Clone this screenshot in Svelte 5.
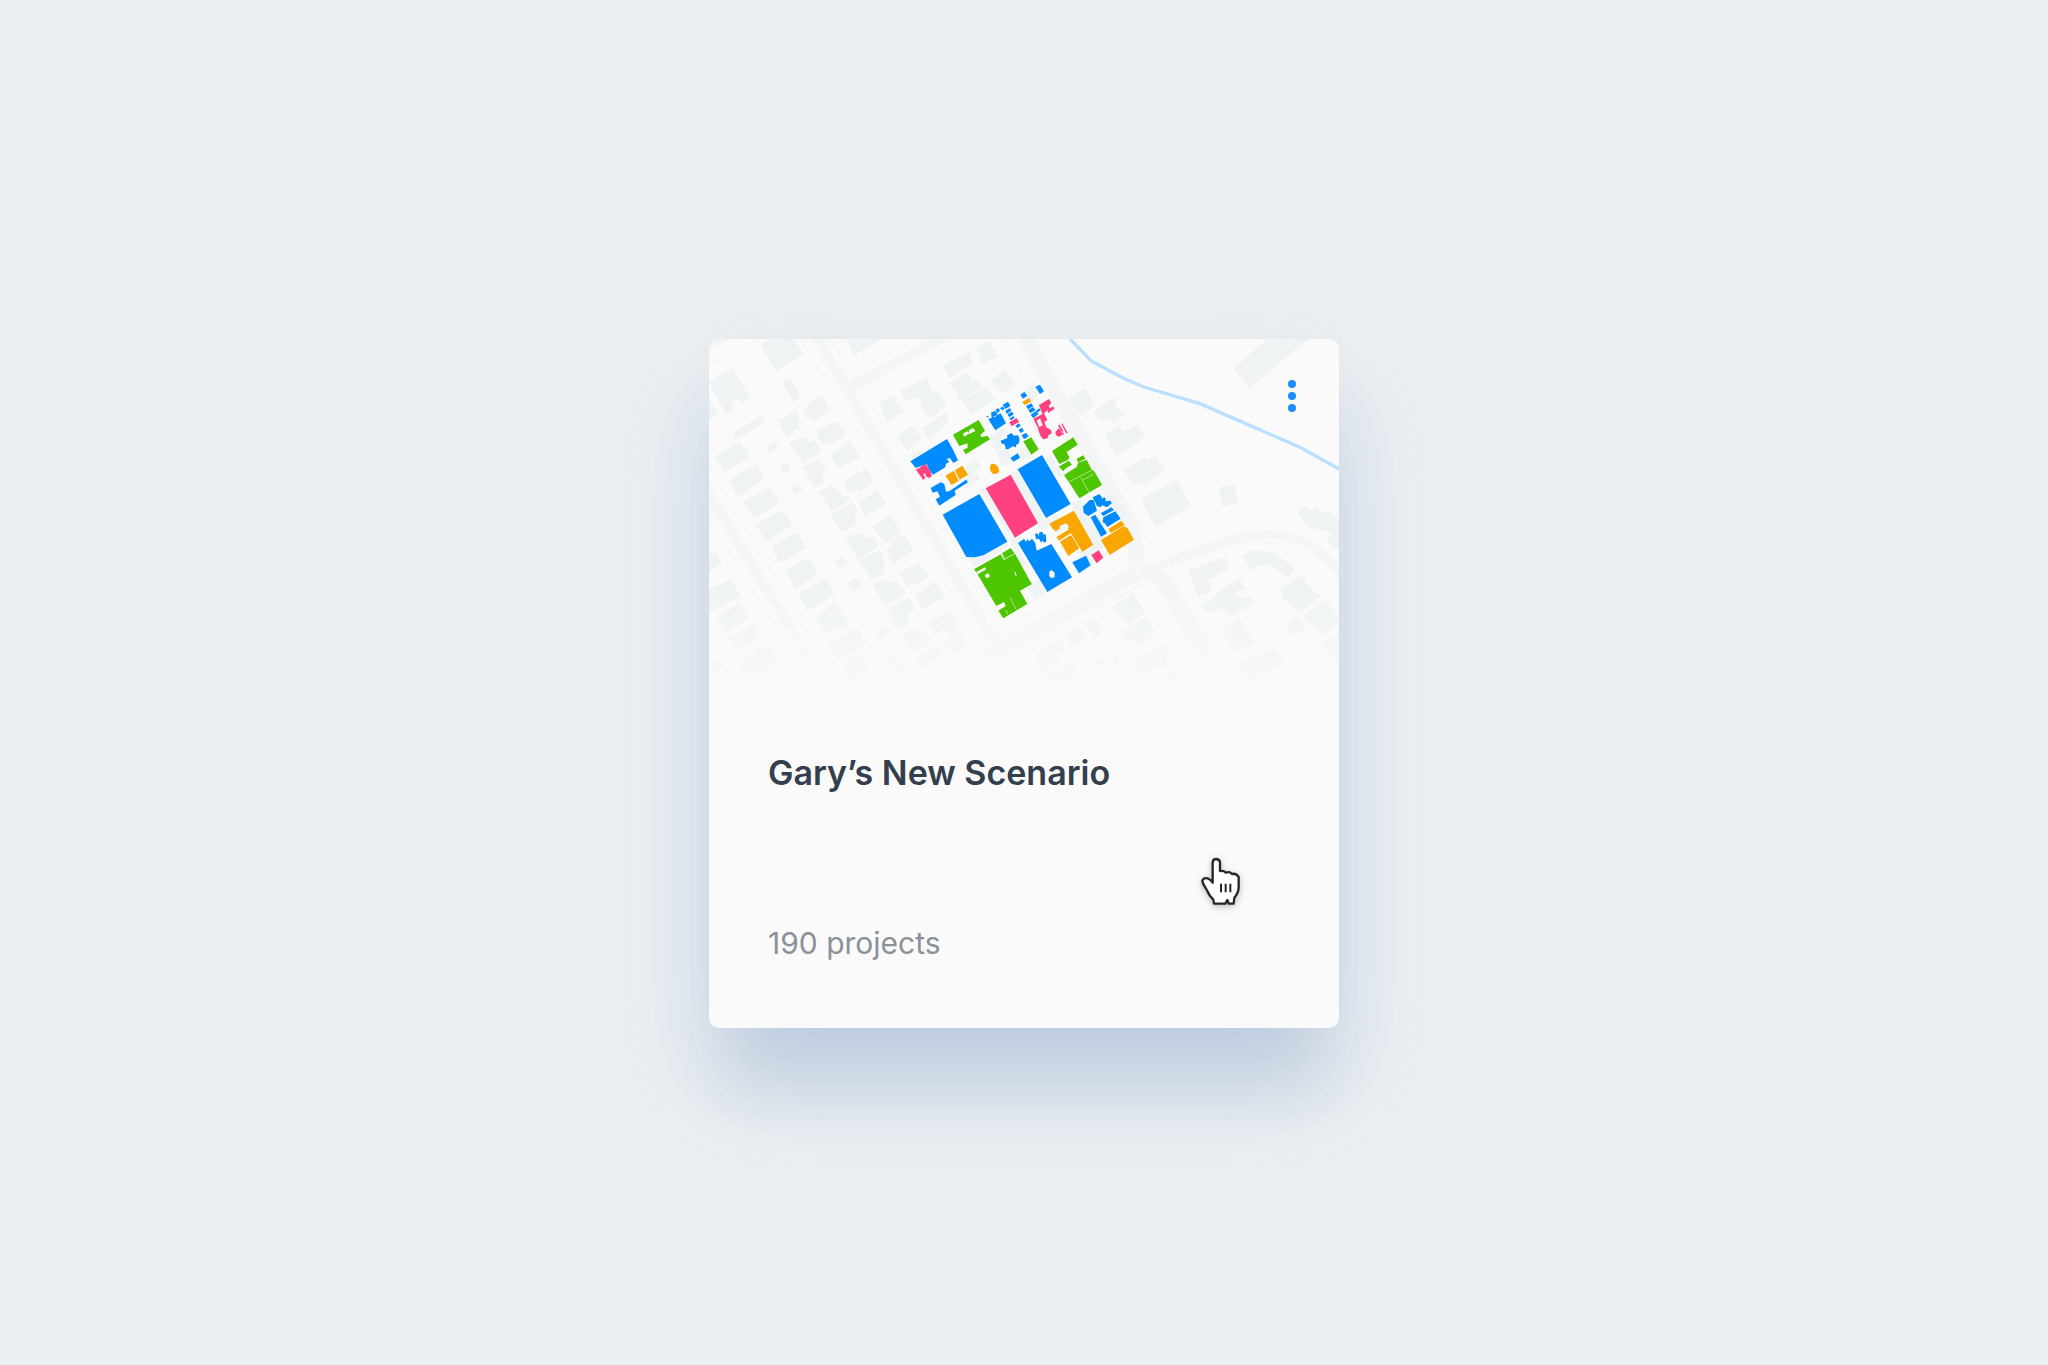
<script>
  // Each sheet is one quarter or detail of the map, with its own origin.
  const ground = [
    { x: -27, y: -27, d: [
      'M180 45L215 27H282L310 73 228 123z', 'M27 157L97 115 152 205 123 220 110 205 93 218 103 238 80 254z',
      'M27 205L55 253 27 273z', 'M248 157l24-13 31 54-23 17z', 'M98 305L187 257 197 277 107 329z',
      'M310 240l16-4-6-13 45-28 26 45-53 36-10-16-12 5z', 'M231 272l56-30 14 24-8 14 6 16-16 4-6 18-15 5z',
      'M348 304l63-32 27 40-37 28-12-5-24 12z', 'M267 340l25-14 22-5 8 16 22-7 22 33-47 30-9 8z',
      'M195 350l28-18 12 19-27 16z', 'M44 379l76-44 8 16 10-3 12 35-78 44z', 'M88 450l82-48 23 46-80 51z',
      'M392 375l60-43 28 49-66 34z', 'M308 413l43-29 28 35-15 13 9 25-28 17z', 'M240 410l20-14 13 20-20 15z',
      'M273 477l20-15 17 18-20 16z', 'M434 452l67-37 20 43-43 25-10-5-19 10-12-15z',
      'M356 487l37-22 13 15 13 4 11 16 14-4 8 12-56 36z', 'M476 520l55-42 28 43-63 38z',
      'M128 517l83-46 28 47-77 46z', 'M168 583l79-43 30 47-78 47z', 'M390 556l68-40 15 25-8 22 1 21-38 22z',
      'M515 590l55-35 35 51-49 34z', 'M437 27h106l-80 50z', 'M540 222l30-24 15 6 3 12 15 18 10 10-52 31z',
      'M601 182l77-41 18 40-78 35z', 'M655 200l56-18 30 38-46 46-20-14z', 'M728 108l80-42 12 34-35 18-35 28z',
      'M747 160l55-34 23 36-10 25-30 22z', 'M825 60l38-27 32 44-15 12-10-4-20 22-12-20 6-10z',
      'M870 150l28-10-2-8 18-16 32 44-35 35-8-17-20-10z', 'M787 210l50-25 25-11 25 35-75 44z',
      'M590 320l45-32 28 30-10 18-32 27z', 'M666 293l75-48 5 32-60 53z', 'M632 375l28-16 8 10-30 18z'
    ] },
    { x: 933, y: -27, d: [
      'M640 113L742 27H868L688 174z', 'M144 207l52-32 28 47-43 37z', 'M220 246l62-44 8 8-4 16 26 25-26 29-26-16-17 9z',
      'M257 310l38-24 17 19 42-22 19 33-12 8 2 8-74 44-20-32z', 'M310 420l65-39 8 8 23-12 30 42-64 49-12-10-21 10z',
      'M362 507l108-58 43 81-107 59z', 'M596 475l48-12 12 57-46 10z',
      'M833 550l22-23 22 14 12-9 26 22 8-12 34 28v30h-57l-12-10-15 10z'
    ] },
    { x: -27, y: 543, d: [
      'M27 105l20-12 18 38-38 24z', 'M27 208l66-30 28 50-94 52z', 'M48 292l70-44 27 44-64 50z',
      'M88 355l70-44 24 38-70 41z', 'M112 438l52-36 4-8 40-20 28 56-82 54z', 'M34 430l24-14 16 24-18 20z',
      'M215 78l78-40 25 46-80 46z', 'M256 152l72-40 26 50-67 44z', 'M294 222l82-46 28 46-80 52z',
      'M346 292l34-22-2-8 30-12 40 66-34 18-16-8-20 14z', 'M378 375l90-52 32 46-88 54z', 'M425 432l58-34 30 46-60 40z',
      'M404 125l24-16 16 20-24 18z', 'M440 192l26-20 20 24-24 20z', 'M437 58l36-18 20 4 8 10 18-4 16 30-58 40z',
      'M558 90l20-14-4-14 38-18 30 46-64 42z', 'M478 122l62-32 16 40-8 16 6 12-38 24z',
      'M598 160l58-32 32 40-40 28-10-6-14 12z', 'M516 196l34-18 22 10 18-4 28 36-60 40z', 'M644 228l62-42 28 44-64 38z',
      'M560 266l66-34 18 30-20 24 4 24-30 18z', 'M684 312l64-40 28 44-20 26-22-12-22 10z',
      'M602 346l40-24 12 12 18-4 24 34-50 32z', 'M715 372l64-36 26 38-38 26-16-8z', 'M646 412l66-34 16 28-64 44z',
      'M524 340l34-24 12 16-26 28z', 'M558 410l20-14 16 20-20 16z', 'M575 440l28-24 20 20-30 26z',
      'M465 500l80-44 30 34-80 60z', 'M180 500l70-48 16 40-70 34z', 'M50 535l50-46 5 30z', 'M790 545l80-50 25 50z'
    ] },
    { x: 933, y: 543, d: [
      'M398 0H445L410 18z', 'M860 0h97v88h-8l-30-28 16-18-30-22-12 5z', 'M504 151l113-41 9 36-63 33 14 33-44 18z',
      'M543 255l48-28-4-8 72-42 20 32-22 0-10 14 16 14 26-10 18 22-80 42-16-27-47 19z',
      'M668 108l28-17 28 2 38 6 24 16 40 33-22 26-34-28-30-14-20 4-30 12z', 'M782 210l58-44 16 14 2 12 44 36-62 52-52-46z',
      'M846 287l70-50 41 60v10l-52 42-20-32-12 0z', 'M796 320l34-28 28 27-40 33z', 'M601 330l58-35 43 72-50 36z',
      'M907 370l50-30v100z', 'M660 430l40-24 10 10 55-34 30 46-110 62z', 'M277 260l62-42 37 57-54 41z',
      'M303 335l74-42 29 45-54 43-16-20-22 3z', 'M192 308l30-17 28 42-22 24z', 'M136 345l40-28 22 32-44 32z',
      'M48 398l72-42 20 36-28 20 8 22-44 18-22-18z', 'M74 470l80-48 30 48-90 40z',
      'M329 430l102-60 18 33-12 15 10 12-80 32z', 'M218 428l20-18 20 20-20 18z', 'M272 425l20-18 18 20-20 18z',
      'M395 480l90-38 8 66-50 30z', 'M685 500l90-40 22 50-60 40z', 'M830 485l38-22 10 20-34 18z',
      'M110 530l80-40 10 40z', 'M300 490l30-20 20 20-40 30z', 'M20 205l35-28 20 30-25 33z'
    ] },
    { x: 573, y: 123, d: [
      'M170 0h60l20 25-75 35z', 'M200 255l28-18 14 24-34 28-20-4z', 'M186 300l42-22 12 18-36 30z',
      'M270 172l40-28 12 14-22 16 8 30-20 12z', 'M288 218l36-16 20 40-36 20z', 'M350 215l36-20 14 26-34 22z',
      'M360 40l40-28 20 30-30 28z', 'M380 66l70 96-24 18-24-34z', 'M322 285l28-16 100 170-24 14z',
      'M240 330l26-16 104 170-20 16z', 'M430 240l24-14 36 60-10 10z'
    ] },
    { x: 903, y: 423, d: [
      'M184 72l26-14 84 130-30 26z', 'M112 120l26-16 30 40-28 20z', 'M58 320l32-16 20 34-34 22z',
      'M0 178l10-4 40 80-14 6z', 'M200 215l60-28 30 38-60 30z', 'M290 50l24-14 50 86-20 10z'
    ] },
    { x: 573, y: 453, d: ['M204 206L310 152 326 168 222 232z'] }
  ];

  const lots = [
    { x: 573, y: 123, shapes: [
      ['blue', 'M31 244L141 177 158 207 174 241 160 249 150 235 140 236 148 246 138 251 136 262 99 284 88 270 80 253 47 264z'],
      ['pink', 'M48 269l29-17 14 22 5 12-7 8-10-4-4-10-5 2 6 13-7 4z'],
      ['green', 'M159 164L236 120 255 152 240 166 246 172 262 167 270 178 197 223 189 210 203 203 202 190 178 198zM188 161l14-7 5 5 0-9 13-6 6 9-17 8-4 1-11 8z'],
      ['orange', 'M136 287l26-15 14 30-21 13zM165 270l22-13 17 27-25 15z'],
      ['orange', 'M271 256c3-6 12-6 17-2 6 5 10 14 9 20-3 8-12 10-18 7-7-4-11-16-8-25z'],
      ['blue', 'M92 324L122 307 133 312 138 335 150 332 198 299 204 307 164 332 167 345 118 377 107 358 120 350 112 334 98 338z'],
      ['blue', 'M265 118L302 100 318 130 286 151zM258 107l8 2-3 4zM273 98l12-6 4 6 6-2-8 14-12 2zM286 90l10-6 4 10-8 3zM300 85l8-6 6 8-7 4zM308 74l16-9 7 13-15 9zM316 92l14-8 4 8-14 9zM322 103l14-8 5 8-13 9zM328 116l12-8 4 5-11 8z'],
      ['pink', 'M328 127l22-13 7 12-22 13z'],
      ['blue', 'M346 137l11-7 5 8-10 6zM356 149l10-6 6 10-10 6zM365 166l13-8 8 11-14 9zM331 234l22-14 7 13-19 12z'],
      ['blue', 'M302 182l20-8-1-8 14-7 6 8 13-1 5 12-2 12-8 4-1 8-10-3-12 8-8 1-4-14-10-4z']
    ] },
    { x: 873, y: 93, shapes: [
      ['blue', 'M106 50l14-6 12 20-12 8zM61 74l12-8 9 11-13 9zM78 108l16-8 6 9-16 9zM84 120l16-9 6 10-14 8zM92 134l16-11 8 8-16 14zM108 122l10-7 4 6-9 6z'],
      ['orange', 'M67 96l20-12 7 10-20 12z'],
      ['pink', 'M117 105l30-18 7 12-8 8 4 8 10-6 3 8-18 12-4-9-6 8-8 4zM100 146l32-16 10 20-9 6 6 16 14 8 2 10-12 8 2 6-14 4-8-8-6-14-4-14zM110 152l8 20 10-7-8-20zM166 186l8-8 4-4 6 12 6-2 2 8-16 8-8-4zM174 166l5-2 14 24-5 2zM184 162l3-2 16 28-4 3z'],
      ['green', 'M70 214l24-12 22 36-22 16z'],
      ['green', 'M156 243L220 202 233 224 200 246 208 262 204 270 178 282zM176 290l30-18 10 12-18 10-8 10zM230 266l20-10 6 10-22 12zM192 315l38-24 4-12 26-10 14 28 10 8 22 40-68 40-28-44z']
    ] },
    { x: 573, y: 453, shapes: [
      ['blue', 'M128 74L238 12 322 155 250 196 225 202 199 201z'],
      ['green', 'M222 238L302 193 311 210 345 191 390 273 396 282 360 302 382 342 310 385 295 362 317 348 312 336 289 348 232 252zM229 246l26-14 4 6-26 15zM255 254l10-4 5 9-8 6-6-4zM343 246l4 1 3 12-4-3z'],
      ['green', 'M306 190l26-16 12 16-32 18z']
    ] },
    { x: 903, y: 423, shapes: [
      ['blue', 'M24 189L42 177 48 186 52 178 58 184 66 176 76 190 80 212 124 192 186 292 112 336zM118 276l6-6 10 8 0 12-8 5-8-6z'],
      ['blue', 'M75 162l8-2 2 8 4-12 8 0 4 8 6-2 2 22-5 4-7-6-4 6-6-12-9 2z'],
      ['orange', 'M118 131L192 92 250 194 217 215 183 160 146 182 140 170 174 150 176 138 168 130 150 137 148 148 136 153 128 146zM150 185l33-20 25 40-33 23z'],
      ['blue', 'M187 247l41-20 14 29-35 24z'],
      ['pink', 'M244 225l22-14 14 22-20 17z'],
      ['orange', 'M273 180L340 139 352 144 372 179 299 225zM296 146l38-24 10 13-42 24z'],
      ['blue', 'M219 80l20-20 12 0 10 32-26 16-14-10zM248 52l20-10 8 10-2 6 8-6 6 4-2 8 16-2 3 8-14 12-14-6-6 6-10-4zM242 112l14-8 35 56-18 10zM272 100l32-18 8 8-32 18zM280 112l36-18 16 22-40 25-6-10-8-4z']
    ] },
    { x: 0, y: 0, shapes: [
      ['pink', 'M830 448L905 407 987 553 918 596z'],
      ['blue', 'M926 391L999 348 1085 495 1011 537z']
    ] }
  ];

  const projects = 190;
</script>

<main>
  <article>
    <svg class="map" viewBox="0 0 1890 1110" aria-hidden="true">
      <defs>
        <linearGradient id="fade" x1="0" y1="0" x2="0" y2="1">
          <stop offset="0" stop-color="#fafafa" stop-opacity="0" />
          <stop offset="1" stop-color="#fafafa" />
        </linearGradient>
      </defs>

      <g class="road">
        <path d="M0 0H70L0 32z" class="solid" />
        <path stroke-width="30" d="M322 -10L850 900M413 150L715 -10M-10 450L350 1040" />
        <path stroke-width="48" d="M945 -10L1262 560Q1285 610 1280 680M1285 700L920 905 590 1100M1300 690Q1350 700 1370 740L1570 1080M840 880L960 1070" />
        <path stroke-width="26" d="M1290 700L1560 603Q1710 560 1810 625 1850 650 1900 710" />
      </g>
      <g class="kerb">
        <path d="M0 81L153 0M273 0L823 923M365 0L441 125M455 143L883 863 1250 660M0 538L293 1023M0 381L393 1043M963 0L1330 623M878 0L1000 210M933 948L1298 733 1510 1080M650 1060L933 948M1600 1080L1387 720Q1375 690 1400 672L1573 616Q1650 595 1740 625 1800 650 1890 755" />
      </g>

      {#each ground as sheet}
        <g class="building" transform="translate({sheet.x} {sheet.y})">
          {#each sheet.d as d}<path {d} />{/each}
        </g>
      {/each}

      <path class="river" d="M1083 0L1148 67 1248 120 1305 144 1473 194 1773 325 1890 390" />
      <rect y="740" width="1890" height="370" fill="url(#fade)" />

      {#each lots as sheet}
        <g transform="translate({sheet.x} {sheet.y})">
          {#each sheet.shapes as [tone, d]}<path class={tone} fill-rule="evenodd" {d} />{/each}
        </g>
      {/each}
      <path class="seam" d="M1081 428L1153 391M1116 416L1142 464M1123 423L1155 405M903 775L921 811M891 813L896 825M879 645L889 661" />
    </svg>

    <button type="button" aria-label="Scenario options">
      <svg width="8" height="34" viewBox="0 0 8 34" aria-hidden="true">
        <circle cx="4" cy="5" r="4" /><circle cx="4" cy="17" r="4" /><circle cx="4" cy="29" r="4" />
      </svg>
    </button>

    <div class="details">
      <h1>Gary’s New Scenario</h1>
      <p>{projects} projects</p>
    </div>

    <svg class="pointer" width="44" height="54" viewBox="0 0 132 162" aria-hidden="true">
      <path class="hand" d="M41 76V31Q42 21 52 21 62 22 63 31V57Q75 55 80 62 92 57 99 66 112 63 119 75V105Q119 122 106 137L104 155H89L85 144 79 155H45L43 143Q31 132 25 117L12 94Q7 82 17 79 29 76 41 92z" />
      <path class="creases" d="M66 95V121M80 95V121M94 95V121" />
    </svg>
  </article>
</main>

<style>
  :global(body) {
    margin: 0;
    background: #ebeff2;
  }

  main {
    display: grid;
    place-items: center;
    min-height: 100vh;
    padding: 26px 24px 24px;
    box-sizing: border-box;
    font-family: Inter, "Liberation Sans", sans-serif;
  }

  article {
    position: relative;
    width: 100%;
    max-width: 630px;
    border-radius: 10px;
    background: #fafafa;
    box-shadow:
      0 80px 50px -20px rgba(50, 100, 150, 0.06),
      0 56px 100px rgba(50, 93, 170, 0.2);
  }

  .map {
    display: block;
    width: 100%;
    border-radius: 10px 10px 0 0;
  }

  .road path {
    fill: none;
    stroke: #f4f6f6;
  }

  .road .solid {
    fill: #f4f6f6;
    stroke: none;
  }

  .kerb path {
    fill: none;
    stroke: #f3f5f5;
    stroke-width: 4;
  }

  .building {
    fill: #eff3f4;
  }

  .river {
    fill: none;
    stroke: #bbe0ff;
    stroke-width: 10;
  }

  .seam {
    fill: none;
    stroke: #d9f3cc;
    stroke-width: 2;
  }

  .blue {
    fill: #008cff;
  }

  .pink {
    fill: #ff4081;
  }

  .green {
    fill: #4dc600;
  }

  .orange {
    fill: #f9a600;
  }

  button {
    position: absolute;
    top: 32px;
    right: 32px;
    display: grid;
    place-items: center;
    width: 30px;
    height: 50px;
    padding: 0;
    border: 0;
    background: none;
    cursor: pointer;
  }

  button circle {
    fill: #1a8fff;
  }

  .details {
    padding: 40px 59px 63px;
  }

  h1 {
    margin: 0;
    color: #343f4d;
    font-size: 34px;
    line-height: 48px;
    font-weight: 600;
  }

  p {
    margin: 124px 0 0;
    color: #8a9199;
    font-size: 30px;
    line-height: 44px;
    font-weight: 400;
  }

  .pointer {
    position: absolute;
    right: 96px;
    bottom: 122px;
    overflow: visible;
    filter: drop-shadow(0 2px 3px rgba(0, 0, 0, 0.25));
  }

  .hand {
    fill: #fff;
    stroke: #262626;
    stroke-width: 7;
    stroke-linejoin: round;
  }

  .creases {
    fill: none;
    stroke: #262626;
    stroke-width: 6;
  }
</style>
